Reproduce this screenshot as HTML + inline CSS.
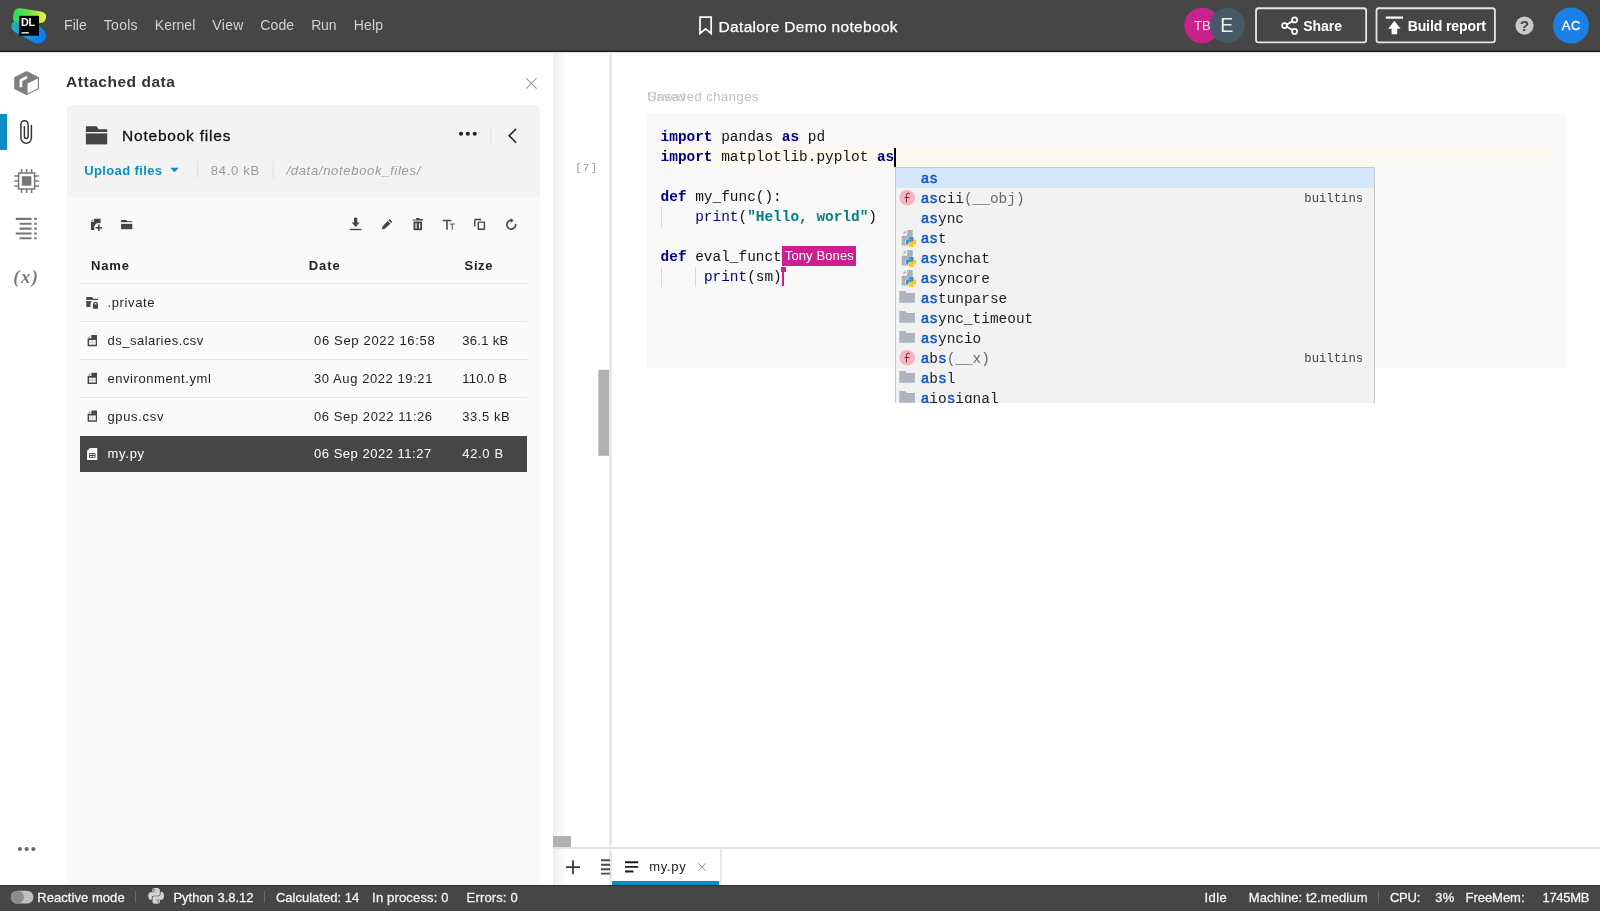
<!DOCTYPE html>
<html><head><meta charset="utf-8"><title>Datalore Demo notebook</title>
<style>
*{margin:0;padding:0;box-sizing:border-box}
html,body{width:1600px;height:911px;overflow:hidden;background:#fff;font-family:"Liberation Sans",sans-serif}
.a{position:absolute}
.tx{position:absolute;white-space:pre;display:block}
svg{position:absolute;left:0;top:0;overflow:visible}
pre{position:absolute;font:400 14.43px/20px "Liberation Mono",monospace;color:#111;white-space:pre}
.k{color:#000080;font-weight:700}
.s{color:#008080;font-weight:700}
.b{color:#000080}
.m{color:#0f55bd;-webkit-text-stroke:.5px #0f55bd}
.g{color:#6a6a6a}
#root{position:absolute;left:0;top:0;width:1600px;height:911px;will-change:transform}
</style></head><body><div id="root">
<!-- ===== left rail / panel backgrounds ===== -->
<div class="a" style="left:0;top:114px;width:7px;height:36px;background:#0a8ec4"></div>
<div class="a" style="left:67px;top:105px;width:473px;height:780px;background:#fafafa;border-radius:5px 5px 0 0"></div>
<div class="a" style="left:67px;top:105px;width:473px;height:92px;background:#f3f3f3;border-radius:5px 5px 0 0"></div>
<!-- rows -->
<div class="a" style="left:80px;top:283px;width:446.5px;height:1px;background:#e7e7e7"></div>
<div class="a" style="left:80px;top:321px;width:446.5px;height:1px;background:#e7e7e7"></div>
<div class="a" style="left:80px;top:359px;width:446.5px;height:1px;background:#e7e7e7"></div>
<div class="a" style="left:80px;top:397px;width:446.5px;height:1px;background:#e7e7e7"></div>
<div class="a" style="left:80px;top:436px;width:446.5px;height:36px;background:#464646"></div>
<!-- panel shadow + gutter -->
<div class="a" style="left:553px;top:53px;width:14px;height:832px;background:linear-gradient(to right,#ededed,#f8f8f8 50%,#fff)"></div>
<div class="a" style="left:553px;top:847px;width:1047px;height:2px;background:#e3e3e3"></div>
<div class="a" style="left:553px;top:836px;width:18px;height:10.5px;background:#b1b1b1"></div>
<!-- tab -->
<div class="a" style="left:612px;top:849px;width:108px;height:36px;background:#fff"></div>
<div class="a" style="left:612px;top:881px;width:107.3px;height:4px;background:#0a8ec4"></div>
<!-- ===== editor cell ===== -->
<div class="a" style="left:647px;top:113px;width:917.5px;height:255px;background:#f8f8f8"></div>
<div class="a" style="left:661px;top:147px;width:890px;height:20px;background:#fcfaef"></div>
<!-- indent guides -->
<div class="a" style="left:660.6px;top:207px;width:1px;height:19.5px;background:#d8d8d8"></div>
<div class="a" style="left:660.6px;top:267px;width:1px;height:19.5px;background:#d8d8d8"></div>
<div class="a" style="left:695.2px;top:267px;width:1px;height:19.5px;background:#d8d8d8"></div>
<pre style="left:660.6px;top:127.15px"><span class="k">import</span> pandas <span class="k">as</span> pd
<span class="k">import</span> matplotlib.pyplot <span class="k">as</span>

<span class="k">def</span> my_func():
    <span class="b">print</span>(<span class="s">"Hello, world"</span>)

<span class="k">def</span> eval_funct
     <span class="b">print</span>(sm)</pre>
<!-- caret -->
<div class="a" style="left:894.4px;top:147.5px;width:1.6px;height:19px;background:#000"></div>
<!-- collaborator cursor -->
<div class="a" style="left:782px;top:245.6px;width:74px;height:20.8px;background:#cd1f8d"></div>
<div class="a" style="left:780.6px;top:267px;width:5px;height:4.8px;background:#cd1f8d"></div>
<div class="a" style="left:781.8px;top:267px;width:2px;height:19.4px;background:#cd1f8d"></div>
<!-- ===== completion popup ===== -->
<div class="a" style="left:895px;top:167px;width:480.3px;height:236px;background:#f2f2f2;border:1px solid #c9c9c9;border-bottom:none"></div>
<div class="a" style="left:896px;top:168px;width:478.3px;height:19.6px;background:#d4e7fc"></div>
<pre style="left:920.7px;top:168.55px;color:#1e1e1e"><span class="m">as</span>
<span class="m">as</span>cii<span class="g">(__obj)</span>
<span class="m">as</span>ync
<span class="m">as</span>t
<span class="m">as</span>ynchat
<span class="m">as</span>yncore
<span class="m">as</span>tunparse
<span class="m">as</span>ync_timeout
<span class="m">as</span>yncio
<span class="m">a</span>b<span class="m">s</span><span class="g">(__x)</span>
<span class="m">a</span>b<span class="m">s</span>l
<span class="m">a</span>io<span class="m">s</span>ignal</pre>
<pre style="left:1304.3px;top:188.9px;font-size:12.25px;color:#444">builtins</pre>
<pre style="left:1304.3px;top:348.9px;font-size:12.25px;color:#444">builtins</pre>
<!-- ===== header ===== -->
<div class="a" style="left:0;top:0;width:1600px;height:51px;background:#464646"></div>
<!-- ===== status bar ===== -->
<div class="a" style="left:0;top:885px;width:1600px;height:26px;background:#464646;border-top:1px solid #2e2e2e"></div>
<div class="a" style="left:135.3px;top:891px;width:1px;height:12px;background:#6a6a6a"></div>
<div class="a" style="left:264px;top:891px;width:1px;height:12px;background:#6a6a6a"></div>
<div class="a" style="left:1378px;top:891px;width:1px;height:12px;background:#6a6a6a"></div>

<!--ICONS_START-->
<svg width="1600" height="911" viewBox="0 0 1600 911">
<defs>
<linearGradient id="lg1" x1="0" y1="0" x2="1" y2="0"><stop offset="0" stop-color="#2fdc55"/><stop offset=".45" stop-color="#5fe04a"/><stop offset="1" stop-color="#fbf03a"/></linearGradient>
<linearGradient id="lg2" x1="0" y1="0" x2="1" y2="0.4"><stop offset="0" stop-color="#22b6b0"/><stop offset=".5" stop-color="#149fd8"/><stop offset="1" stop-color="#0b7df2"/></linearGradient>
</defs>
<rect x="0" y="50.700" width="1600" height="1.350" fill="#171717"/><rect x="0" y="52" width="1600" height=".600" fill="#000" opacity=".12"/>
<rect x="609.400" y="52" width="2.400" height="833" fill="#e4e4e4"/><rect x="598.300" y="369.800" width="10.800" height="86" fill="#b1b1b1"/>
<!-- logo -->
<g id="logo">
<path d="M20.5 8.2 L41 11.6 Q47 13 46 17.5 L45.6 19 Q44.5 23 40 23 L20 24 Q12.5 24 13 17 L13.6 13.5 Q14.8 7.6 20.5 8.2Z" fill="url(#lg1)"/>
<path d="M17 21.5 Q11 21.5 11.5 27 Q12 30.5 15.5 32.5 L34 42.5 Q38 44.5 42 42.5 Q46.5 40 46 34.5 Q45.8 31 42.5 28.5 L36 23.5 Q33 21.2 29 21.3Z" fill="url(#lg2)"/>
<rect x="19.1" y="15.8" width="19.9" height="19.9" fill="#000"/>
<rect x="21.5" y="32.2" width="7.4" height="1.3" fill="#fff"/>
<text x="21.1" y="25.9" font-family="'Liberation Sans',sans-serif" font-weight="700" font-size="10.8" fill="#fff" letter-spacing="-0.35">DL</text>
</g>
<!-- bookmark -->
<path d="M700 17.1h11.2v16.4l-5.6-4.6-5.6 4.6z" fill="none" stroke="#fff" stroke-width="1.7" stroke-linejoin="miter"/>
<!-- avatars -->
<circle cx="1202" cy="25.5" r="17.8" fill="#c7238b"/>
<text x="1194" y="30.3" font-family="'Liberation Sans',sans-serif" font-size="13" fill="#f6e6f0">TB</text>
<circle cx="1227.4" cy="25.5" r="17.6" fill="#455a69" fill-opacity=".93"/>
<circle cx="1571" cy="25.5" r="18" fill="#1a80e6"/>
<rect x="1256.05" y="8.25" width="110.1" height="34.1" rx="2.4" fill="none" stroke="#e6e6e6" stroke-width="1.8"/>
<rect x="1376.5" y="8.25" width="118.4" height="34.1" rx="2.4" fill="none" stroke="#e6e6e6" stroke-width="1.8"/>
<!-- share icon -->
<g fill="none" stroke="#fff" stroke-width="1.7"><circle cx="1294.6" cy="19.9" r="2.5"/><circle cx="1284.6" cy="25.6" r="2.5"/><circle cx="1294.6" cy="31.4" r="2.5"/><path d="M1286.8 24.4l5.6-3.2M1286.8 26.8l5.6 3.3"/></g>
<!-- build icon -->
<g fill="#fff"><rect x="1385.8" y="16.5" width="17.2" height="2.2"/><path d="M1394.4 20.7l6.2 8h-3.4v5.5h-5.6v-5.5h-3.4z"/></g>
<!-- help -->
<circle cx="1524.5" cy="25.6" r="9.1" fill="#c9c9c9"/>
<text x="1524.6" y="31" text-anchor="middle" font-family="'Liberation Sans',sans-serif" font-weight="700" font-size="15.5" fill="#464646">?</text>
<!-- ===== left rail ===== -->
<g id="cube">
<path d="M26.6 71L39 77.2V89L26.6 95.2 14.2 89V77.2z" fill="#7f7f7f"/>
<path d="M27.6 83.6L37.9 78.5V88.3L27.6 93.5z" fill="#fff"/>
<path d="M20.9 87.2V80.3L27 77.2" fill="none" stroke="#fff" stroke-width="2.6"/>
</g>
<path d="M31.4 125.5V138a5.25 5.25 0 0 1-10.5 0V124.3a3.6 3.6 0 0 1 7.2 0V136.6a1.85 1.85 0 0 1-3.7 0V126.8" fill="none" stroke="#333" stroke-width="1.45" stroke-linecap="round"/>
<g id="chip" fill="none" stroke="#777" stroke-width="1.5">
<rect x="18.6" y="173" width="16" height="16"/>
<rect x="22.6" y="177" width="8" height="8" fill="#777"/>
<path d="M21.6 169v4M26.6 169v4M31.6 169v4M21.6 189v4M26.6 189v4M31.6 189v4M14.4 176h4M14.4 181h4M14.4 186h4M34.6 176h4.4M34.6 181h4.4M34.6 186h4.4"/>
</g>
<g id="outline" stroke="#777" stroke-width="2.1" fill="none">
<path d="M15.8 218.9H31.6M19.6 223.7H31.6M19.6 228.6H31.6M15.8 233.5H31.6M19.6 238.3H31.6"/>
<path d="M34.2 218.9h2.6M34.2 223.7h2.6M34.2 228.6h2.6M34.2 233.5h2.6M34.2 238.3h2.6"/>
</g>
<g fill="#666"><circle cx="19.9" cy="849" r="2.1"/><circle cx="26.6" cy="849" r="2.1"/><circle cx="33.4" cy="849" r="2.1"/></g>
<!-- ===== panel ===== -->
<path d="M526.2 78.2l10.4 10.4M536.6 78.2l-10.4 10.4" stroke="#9b9b9b" stroke-width="1.15" fill="none"/>
<g id="bigfolder" fill="#444"><path d="M85.900 126.300h10.700l1.900 3h8.700v2.600H85.900z"/><rect x="85.900" y="133.400" width="21.300" height="11"/></g>
<g fill="#222"><circle cx="461" cy="133.8" r="2.05"/><circle cx="467.8" cy="133.8" r="2.05"/><circle cx="474.7" cy="133.8" r="2.05"/></g>
<rect x="490.2" y="127" width="1" height="17" fill="#e2e2e2"/>
<path d="M516.2 128.8l-7 6.9 7 7" fill="none" stroke="#222" stroke-width="1.6"/>
<path d="M170.2 167.8h8.6l-4.3 4.5z" fill="#0d8fc6"/>
<rect x="197.1" y="161" width="1" height="17.4" fill="#e2e2e2"/>
<rect x="272.8" y="161" width="1" height="17.4" fill="#e2e2e2"/>
<!-- toolbar: new file -->
<g id="newfile" fill="#444">
<path d="M94.1 218.7h6.500v11.200h-9.600v-8.100h3.100z"/><path d="M91.200 221l1.900-1.900v1.900z" opacity=".8"/>
<circle cx="98.800" cy="227.800" r="4.700" fill="#fafafa"/>
<path d="M98 224.600h1.600v2.400h2.400v1.600h-2.400v2.400h-1.600v-2.400h-2.400v-1.600h2.400z"/>
</g>
<g id="smfolder" fill="#444"><path d="M121.100 220.100h5.200l1.200 1.100h4.800v1h-11.200z"/><rect x="121.100" y="223.900" width="11.200" height="5.300"/></g>
<!-- download -->
<g fill="#444"><path d="M354 217.8h3.3v4.8h2.4l-4.05 4.5-4.05-4.5h2.4z"/><rect x="349.7" y="228.8" width="11.7" height="1.4"/></g>
<!-- pencil -->
<g fill="#444"><path d="M389.6 219l2.7 2.7-1.3 1.3-2.7-2.7zM387.6 220.9l2.8 2.8-5.6 5.1-2.9.6.6-2.9z"/></g>
<!-- trash -->
<g fill="#444"><path d="M416.2 218h3.2v1.1h3.5v1.5h-10.2v-1.1h3.5z"/><path d="M413.5 221.6h8.6v7.4q0 1.2-1.2 1.2h-6.2q-1.2 0-1.2-1.2zM415.4 223.3v5.3h1.3v-5.3zM418.9 223.3v5.3h1.3v-5.3z" fill-rule="evenodd"/></g>
<!-- Tt -->
<g fill="#4a4a4a"><path d="M442.7 219.8h8.6v1.5h-3.5v8.4h-1.6v-8.4h-3.5z"/><path d="M449.6 223.4h5.4v1.2h-2.1v5.1h-1.2v-5.1h-2.1z" fill="#666"/></g>
<!-- copy -->
<g fill="none" stroke="#444" stroke-width="1.45"><rect x="478.3" y="222.1" width="6.1" height="7.2" rx=".6"/><path d="M474.8 226.6v-6.4q0-.8.8-.8h5.6"/></g>
<!-- refresh -->
<g fill="none" stroke="#444" stroke-width="1.650"><path d="M511.3 220.3a4.4 4.4 0 1 0 4.3 3.6"/></g><path d="M510.6 217.9l3 2.5-3 2.5z" fill="#444"/>
<!-- ===== row icons ===== -->
<g id="privicon" fill="#4a4a4a" fill-rule="evenodd"><path d="M86.250 297h5.800l1.400 1.700h4.600v1.300h-11.800z"/><path d="M86.250 301.100h5.700q-1.400 1.200-1.500 3.200v2.600h-4.200z"/>
<path d="M93 304.500v-.300a2.500 2.500 0 0 1 5 0v.300v4.250h-5zM94.500 304.500h2v-.400a1 1 0 0 0-2 0z"/></g>
<g fill="#474747" fill-rule="evenodd"><path d="M91.40 334.90h5.600v11.350h-9.400v-8h3.800zM89.10 339.90h6.650v4.850h-6.650z"/><path d="M88.00 337.60l2.300-2.300v2.300z" opacity=".55"/><path d="M89.10 342.05h6.650v.550h-6.650zM92.15 339.90h.550v4.850h-.550z" opacity=".45"/></g>
<g fill="#474747" fill-rule="evenodd"><path d="M91.40 372.70h5.600v11.350h-9.400v-8h3.800zM89.10 377.70h6.650v4.850h-6.650z"/><path d="M88.00 375.40l2.300-2.300v2.300z" opacity=".55"/><path d="M89.10 379.85h6.650v.550h-6.650zM92.15 377.70h.550v4.850h-.550z" opacity=".45"/></g>
<g fill="#474747" fill-rule="evenodd"><path d="M91.40 410.50h5.600v11.350h-9.400v-8h3.800zM89.10 415.50h6.650v4.850h-6.650z"/><path d="M88.00 413.20l2.300-2.300v2.300z" opacity=".55"/><path d="M89.10 417.65h6.650v.550h-6.650zM92.15 415.50h.550v4.850h-.550z" opacity=".45"/></g>
<g fill="#fff" fill-rule="evenodd"><path d="M89.95 447.90h7.300v12.100h-10.150v-9.250zM89.10 453.00h6.400v5h-6.400zM89.95 453.85v1.100h1.900v-1.100zM92.75 453.85v1.100h1.900v-1.100zM89.95 456.05v1.100h1.900v-1.100zM92.75 456.05v1.100h1.900v-1.100z"/></g>

<!-- ===== tab bar ===== -->
<rect x="720" y="849" width="1.750" height="35.500" fill="#e5e5e5"/>
<path d="M566 867.2h14M573 860.2v14" stroke="#3a3a3a" stroke-width="1.800" fill="none"/>
<path d="M601 860.2h9M601 864.7h9M601 869.2h9M601 873.6h9" stroke="#4a4a4a" stroke-width="1.900" fill="none"/>
<path d="M625 862.3h13.2M625 866.9h13.2M625 871.5h8.400" stroke="#1c1c1c" stroke-width="1.900" fill="none"/>
<path d="M698.2 863.2l7.6 7.6M705.8 863.2l-7.6 7.6" stroke="#9a9a9a" stroke-width="1" fill="none"/>
<!-- toggle -->
<rect x="10.900" y="890.700" width="22.500" height="12.900" rx="6.450" fill="#c1c1c1"/><circle cx="17.400" cy="897.150" r="6.450" fill="#8b8b8b"/>
<!-- python status icon -->
<g id="pyst" fill="#d2d2d2" fill-rule="evenodd"><path d="M156.07 888.10C152.07 888.10 152.30 889.83 152.30 889.83L152.30 891.63H156.15V892.18H150.81C150.81 892.18 148.30 891.87 148.30 895.95C148.30 899.95 150.50 899.80 150.50 899.80H151.83V897.91C151.83 897.91 151.75 895.71 153.95 895.71H157.72C157.72 895.71 159.84 895.79 159.84 893.67V890.22C159.84 890.22 160.15 888.10 156.07 888.10ZM153.95 889.12a.750.750 0 1 1 0 1.500a.750.750 0 0 1 0-1.500z"/><path d="M156.23 903.80C160.23 903.80 160.00 902.07 160.00 902.07L160.00 900.27H156.15V899.72H161.49C161.49 899.72 164.00 900.03 164.00 895.95C164.00 891.95 161.80 892.10 161.80 892.10H160.47V893.99C160.47 893.99 160.55 896.19 158.35 896.19H154.58C154.58 896.19 152.46 896.11 152.46 898.23V901.68C152.46 901.68 152.15 903.80 156.23 903.80ZM158.35 902.78a.750.750 0 1 1 0-1.500a.750.750 0 0 1 0 1.500z"/></g>
<!-- popup icons -->
<circle cx="907.2" cy="197.70" r="7.800" fill="#f8b3c0"/><path d="M909.300 193.50q-2.700-.700-2.800 1.900v6.600M904.900 197.50h4.200" fill="none" stroke="#6d3b47" stroke-width="1.050" stroke-linecap="round"/><circle cx="907.2" cy="357.70" r="7.800" fill="#f8b3c0"/><path d="M909.300 353.50q-2.700-.700-2.800 1.900v6.600M904.900 357.50h4.200" fill="none" stroke="#6d3b47" stroke-width="1.050" stroke-linecap="round"/><path d="M902.500 233.60l3.300-3.300v3.300z" fill="#a9b2ba"/><path d="M907.200 230.10h5.500v15.400h-11v-9.750h5.500z" fill="#a9b2ba"/><path d="M911.10 236.80C908.47 236.80 908.63 237.93 908.63 237.93L908.63 239.12H911.15V239.48H907.65C907.65 239.48 906.00 239.27 906.00 241.95C906.00 244.58 907.44 244.47 907.44 244.47H908.32V243.24C908.32 243.24 908.27 241.80 909.71 241.80H912.18C912.18 241.80 913.57 241.85 913.57 240.46V238.19C913.57 238.19 913.78 236.80 911.10 236.80Z" fill="#3d95d4" stroke="#f2f2f2" stroke-width="1.300" paint-order="stroke"/><path d="M911.20 247.10C913.83 247.10 913.67 245.97 913.67 245.97L913.67 244.78H911.15V244.42H914.65C914.65 244.42 916.30 244.63 916.30 241.95C916.30 239.32 914.86 239.43 914.86 239.43H913.98V240.66C913.98 240.66 914.03 242.10 912.59 242.10H910.12C910.12 242.10 908.73 242.05 908.73 243.44V245.71C908.73 245.71 908.52 247.10 911.20 247.10Z" fill="#fbc81e" stroke="#f2f2f2" stroke-width="1.300" paint-order="stroke"/><path d="M911.10 236.80C908.47 236.80 908.63 237.93 908.63 237.93L908.63 239.12H911.15V239.48H907.65C907.65 239.48 906.00 239.27 906.00 241.95C906.00 244.58 907.44 244.47 907.44 244.47H908.32V243.24C908.32 243.24 908.27 241.80 909.71 241.80H912.18C912.18 241.80 913.57 241.85 913.57 240.46V238.19C913.57 238.19 913.78 236.80 911.10 236.80Z" fill="#3d95d4"/><path d="M902.500 253.60l3.300-3.300v3.300z" fill="#a9b2ba"/><path d="M907.200 250.10h5.500v15.400h-11v-9.750h5.500z" fill="#a9b2ba"/><path d="M911.10 256.80C908.47 256.80 908.63 257.93 908.63 257.93L908.63 259.12H911.15V259.48H907.65C907.65 259.48 906.00 259.27 906.00 261.95C906.00 264.58 907.44 264.47 907.44 264.47H908.32V263.24C908.32 263.24 908.27 261.80 909.71 261.80H912.18C912.18 261.80 913.57 261.85 913.57 260.46V258.19C913.57 258.19 913.78 256.80 911.10 256.80Z" fill="#3d95d4" stroke="#f2f2f2" stroke-width="1.300" paint-order="stroke"/><path d="M911.20 267.10C913.83 267.10 913.67 265.97 913.67 265.97L913.67 264.78H911.15V264.42H914.65C914.65 264.42 916.30 264.63 916.30 261.95C916.30 259.32 914.86 259.43 914.86 259.43H913.98V260.66C913.98 260.66 914.03 262.10 912.59 262.10H910.12C910.12 262.10 908.73 262.05 908.73 263.44V265.71C908.73 265.71 908.52 267.10 911.20 267.10Z" fill="#fbc81e" stroke="#f2f2f2" stroke-width="1.300" paint-order="stroke"/><path d="M911.10 256.80C908.47 256.80 908.63 257.93 908.63 257.93L908.63 259.12H911.15V259.48H907.65C907.65 259.48 906.00 259.27 906.00 261.95C906.00 264.58 907.44 264.47 907.44 264.47H908.32V263.24C908.32 263.24 908.27 261.80 909.71 261.80H912.18C912.18 261.80 913.57 261.85 913.57 260.46V258.19C913.57 258.19 913.78 256.80 911.10 256.80Z" fill="#3d95d4"/><path d="M902.500 273.60l3.300-3.300v3.300z" fill="#a9b2ba"/><path d="M907.200 270.10h5.500v15.400h-11v-9.750h5.500z" fill="#a9b2ba"/><path d="M911.10 276.80C908.47 276.80 908.63 277.93 908.63 277.93L908.63 279.12H911.15V279.48H907.65C907.65 279.48 906.00 279.27 906.00 281.95C906.00 284.58 907.44 284.47 907.44 284.47H908.32V283.24C908.32 283.24 908.27 281.80 909.71 281.80H912.18C912.18 281.80 913.57 281.85 913.57 280.46V278.19C913.57 278.19 913.78 276.80 911.10 276.80Z" fill="#3d95d4" stroke="#f2f2f2" stroke-width="1.300" paint-order="stroke"/><path d="M911.20 287.10C913.83 287.10 913.67 285.97 913.67 285.97L913.67 284.78H911.15V284.42H914.65C914.65 284.42 916.30 284.63 916.30 281.95C916.30 279.32 914.86 279.43 914.86 279.43H913.98V280.66C913.98 280.66 914.03 282.10 912.59 282.10H910.12C910.12 282.10 908.73 282.05 908.73 283.44V285.71C908.73 285.71 908.52 287.10 911.20 287.10Z" fill="#fbc81e" stroke="#f2f2f2" stroke-width="1.300" paint-order="stroke"/><path d="M911.10 276.80C908.47 276.80 908.63 277.93 908.63 277.93L908.63 279.12H911.15V279.48H907.65C907.65 279.48 906.00 279.27 906.00 281.95C906.00 284.58 907.44 284.47 907.44 284.47H908.32V283.24C908.32 283.24 908.27 281.80 909.71 281.80H912.18C912.18 281.80 913.57 281.85 913.57 280.46V278.19C913.57 278.19 913.78 276.80 911.10 276.80Z" fill="#3d95d4"/><path d="M899.350 291.00h5.200q.700 0 1.100.600l1.100 1.500h8.150v9.750h-15.550z" fill="#acb5bd"/><path d="M899.350 311.00h5.200q.700 0 1.100.600l1.100 1.500h8.150v9.750h-15.550z" fill="#acb5bd"/><path d="M899.350 331.00h5.200q.700 0 1.100.600l1.100 1.500h8.150v9.750h-15.550z" fill="#acb5bd"/><path d="M899.350 371.00h5.200q.700 0 1.100.600l1.100 1.500h8.150v9.750h-15.550z" fill="#acb5bd"/><path d="M899.350 391.00h5.200q.700 0 1.100.600l1.100 1.500h8.150v9.750h-15.550z" fill="#acb5bd"/>
</svg>

<!--ICONS_END-->
<div class="a" style="left:890px;top:403px;width:490px;height:12px;background:#fff"></div>
<span id="t0" class="tx" style="left:64.06px;top:15.25px;font:400 14px/20px 'Liberation Sans', sans-serif;color:#d2d2d2;letter-spacing:0.079px;">File</span>
<span id="t1" class="tx" style="left:103.86px;top:15.25px;font:400 14px/20px 'Liberation Sans', sans-serif;color:#d2d2d2;letter-spacing:0.258px;">Tools</span>
<span id="t2" class="tx" style="left:154.86px;top:15.25px;font:400 14px/20px 'Liberation Sans', sans-serif;color:#d2d2d2;letter-spacing:-0.015px;">Kernel</span>
<span id="t3" class="tx" style="left:212.16px;top:15.25px;font:400 14px/20px 'Liberation Sans', sans-serif;color:#d2d2d2;letter-spacing:0.397px;">View</span>
<span id="t4" class="tx" style="left:260.16px;top:15.25px;font:400 14px/20px 'Liberation Sans', sans-serif;color:#d2d2d2;letter-spacing:0.178px;">Code</span>
<span id="t5" class="tx" style="left:311.16px;top:15.25px;font:400 14px/20px 'Liberation Sans', sans-serif;color:#d2d2d2;letter-spacing:-0.169px;">Run</span>
<span id="t6" class="tx" style="left:353.66px;top:15.25px;font:400 14px/20px 'Liberation Sans', sans-serif;color:#d2d2d2;letter-spacing:0.221px;">Help</span>
<span id="t7" class="tx" style="left:718.57px;top:15.93px;font:400 15.5px/22px 'Liberation Sans', sans-serif;color:#fff;letter-spacing:0.320px;-webkit-text-stroke:.25px #fff;">Datalore Demo notebook</span>
<span id="t8" class="tx" style="left:1220.33px;top:12.34px;font:400 19.5px/27px 'Liberation Sans', sans-serif;color:#eef2f5;letter-spacing:-1.176px;">E</span>
<span id="t9" class="tx" style="left:1303.16px;top:16.05px;font:700 14px/20px 'Liberation Sans', sans-serif;color:#fff;letter-spacing:-0.008px;">Share</span>
<span id="t10" class="tx" style="left:1407.66px;top:16.15px;font:700 14px/20px 'Liberation Sans', sans-serif;color:#fff;letter-spacing:-0.097px;">Build report</span>
<span id="t11" class="tx" style="left:1561.82px;top:17.40px;font:400 13px/18px 'Liberation Sans', sans-serif;color:#fff;letter-spacing:0.399px;-webkit-text-stroke:.3px #fff;">AC</span>
<span id="t12" class="tx" style="left:66.07px;top:70.73px;font:700 15.5px/22px 'Liberation Sans', sans-serif;color:#333;letter-spacing:0.528px;">Attached data</span>
<span id="t13" class="tx" style="left:122.07px;top:124.73px;font:400 15.5px/22px 'Liberation Sans', sans-serif;color:#111;letter-spacing:0.780px;-webkit-text-stroke:.3px #111;">Notebook files</span>
<span id="t14" class="tx" style="left:84.22px;top:161.70px;font:700 13px/18px 'Liberation Sans', sans-serif;color:#0d8fc6;letter-spacing:0.373px;">Upload files</span>
<span id="t15" class="tx" style="left:210.82px;top:161.50px;font:400 13px/18px 'Liberation Sans', sans-serif;color:#9a9a9a;letter-spacing:0.724px;">84.0 kB</span>
<span id="t16" class="tx" style="left:286.42px;top:161.50px;font:400 13px/18px 'Liberation Sans', sans-serif;color:#9a9a9a;letter-spacing:0.699px;font-style:italic;">/data/notebook_files/</span>
<span id="t17" class="tx" style="left:90.92px;top:256.70px;font:700 13px/18px 'Liberation Sans', sans-serif;color:#222;letter-spacing:0.910px;">Name</span>
<span id="t18" class="tx" style="left:308.72px;top:256.70px;font:700 13px/18px 'Liberation Sans', sans-serif;color:#222;letter-spacing:0.968px;">Date</span>
<span id="t19" class="tx" style="left:464.62px;top:256.70px;font:700 13px/18px 'Liberation Sans', sans-serif;color:#222;letter-spacing:0.611px;">Size</span>
<span id="t20" class="tx" style="left:107.42px;top:294.10px;font:400 13px/18px 'Liberation Sans', sans-serif;color:#1f1f1f;letter-spacing:0.652px;">.private</span>
<span id="t21" class="tx" style="left:107.42px;top:331.90px;font:400 13px/18px 'Liberation Sans', sans-serif;color:#1f1f1f;letter-spacing:0.506px;">ds_salaries.csv</span>
<span id="t22" class="tx" style="left:314.02px;top:331.90px;font:400 13px/18px 'Liberation Sans', sans-serif;color:#1f1f1f;letter-spacing:0.675px;">06 Sep 2022 16:58</span>
<span id="t23" class="tx" style="left:462.32px;top:331.90px;font:400 13px/18px 'Liberation Sans', sans-serif;color:#1f1f1f;letter-spacing:0.295px;">36.1 kB</span>
<span id="t24" class="tx" style="left:107.42px;top:369.80px;font:400 13px/18px 'Liberation Sans', sans-serif;color:#1f1f1f;letter-spacing:0.572px;">environment.yml</span>
<span id="t25" class="tx" style="left:314.02px;top:369.80px;font:400 13px/18px 'Liberation Sans', sans-serif;color:#1f1f1f;letter-spacing:0.576px;">30 Aug 2022 19:21</span>
<span id="t26" class="tx" style="left:462.32px;top:369.80px;font:400 13px/18px 'Liberation Sans', sans-serif;color:#1f1f1f;letter-spacing:0.172px;">110.0 B</span>
<span id="t27" class="tx" style="left:107.42px;top:407.50px;font:400 13px/18px 'Liberation Sans', sans-serif;color:#1f1f1f;letter-spacing:0.668px;">gpus.csv</span>
<span id="t28" class="tx" style="left:314.02px;top:407.50px;font:400 13px/18px 'Liberation Sans', sans-serif;color:#1f1f1f;letter-spacing:0.573px;">06 Sep 2022 11:26</span>
<span id="t29" class="tx" style="left:462.32px;top:407.50px;font:400 13px/18px 'Liberation Sans', sans-serif;color:#1f1f1f;letter-spacing:0.538px;">33.5 kB</span>
<span id="t30" class="tx" style="left:107.42px;top:445.30px;font:400 13px/18px 'Liberation Sans', sans-serif;color:#fff;letter-spacing:0.748px;">my.py</span>
<span id="t31" class="tx" style="left:314.02px;top:445.30px;font:400 13px/18px 'Liberation Sans', sans-serif;color:#fff;letter-spacing:0.514px;">06 Sep 2022 11:27</span>
<span id="t32" class="tx" style="left:462.32px;top:445.30px;font:400 13px/18px 'Liberation Sans', sans-serif;color:#fff;letter-spacing:0.661px;">42.0 B</span>
<span id="t33" class="tx" style="left:647.22px;top:88.10px;font:400 13px/18px 'Liberation Sans', sans-serif;color:#d0d0d0;letter-spacing:0.277px;">Saved</span>
<span id="t34" class="tx" style="left:647.22px;top:88.10px;font:400 13px/18px 'Liberation Sans', sans-serif;color:#bebebe;letter-spacing:0.519px;">Unsaved changes</span>
<span id="t35" class="tx" style="left:575.20px;top:160.87px;font:400 11px/15px 'Liberation Mono', monospace;color:#999;letter-spacing:1.050px;">[7]</span>
<span id="t36" class="tx" style="left:784.82px;top:246.80px;font:400 13px/18px 'Liberation Sans', sans-serif;color:#fff;letter-spacing:0.112px;">Tony Bones</span>
<span id="t37" class="tx" style="left:649.22px;top:857.80px;font:400 13px/18px 'Liberation Sans', sans-serif;color:#222;letter-spacing:0.688px;">my.py</span>
<span id="t38" class="tx" style="left:37.32px;top:889.20px;font:400 13px/18px 'Liberation Sans', sans-serif;color:#f4f4f4;letter-spacing:0.049px;-webkit-text-stroke:.28px #f4f4f4;">Reactive mode</span>
<span id="t39" class="tx" style="left:173.42px;top:889.20px;font:400 13px/18px 'Liberation Sans', sans-serif;color:#f4f4f4;letter-spacing:-0.006px;-webkit-text-stroke:.28px #f4f4f4;">Python 3.8.12</span>
<span id="t40" class="tx" style="left:275.92px;top:889.20px;font:400 13px/18px 'Liberation Sans', sans-serif;color:#f4f4f4;letter-spacing:0.010px;-webkit-text-stroke:.28px #f4f4f4;">Calculated: 14</span>
<span id="t41" class="tx" style="left:372.12px;top:889.20px;font:400 13px/18px 'Liberation Sans', sans-serif;color:#f4f4f4;letter-spacing:0.163px;-webkit-text-stroke:.28px #f4f4f4;">In process: 0</span>
<span id="t42" class="tx" style="left:466.62px;top:889.20px;font:400 13px/18px 'Liberation Sans', sans-serif;color:#f4f4f4;letter-spacing:0.146px;-webkit-text-stroke:.28px #f4f4f4;">Errors: 0</span>
<span id="t43" class="tx" style="left:1204.62px;top:889.20px;font:400 13px/18px 'Liberation Sans', sans-serif;color:#f4f4f4;letter-spacing:0.398px;-webkit-text-stroke:.28px #f4f4f4;">Idle</span>
<span id="t44" class="tx" style="left:1248.72px;top:889.20px;font:400 13px/18px 'Liberation Sans', sans-serif;color:#f4f4f4;letter-spacing:0.100px;-webkit-text-stroke:.28px #f4f4f4;">Machine: t2.medium</span>
<span id="t45" class="tx" style="left:1389.92px;top:889.20px;font:400 13px/18px 'Liberation Sans', sans-serif;color:#f4f4f4;letter-spacing:-0.201px;-webkit-text-stroke:.28px #f4f4f4;">CPU:</span>
<span id="t46" class="tx" style="left:1435.22px;top:889.20px;font:400 13px/18px 'Liberation Sans', sans-serif;color:#f4f4f4;letter-spacing:0.382px;-webkit-text-stroke:.28px #f4f4f4;">3%</span>
<span id="t47" class="tx" style="left:1465.52px;top:889.20px;font:400 13px/18px 'Liberation Sans', sans-serif;color:#f4f4f4;letter-spacing:-0.034px;-webkit-text-stroke:.28px #f4f4f4;">FreeMem:</span>
<span id="t48" class="tx" style="left:1542.42px;top:889.20px;font:400 13px/18px 'Liberation Sans', sans-serif;color:#f4f4f4;letter-spacing:-0.260px;-webkit-text-stroke:.28px #f4f4f4;">1745MB</span>
<span id="t49" class="tx" style="left:13.28px;top:264.02px;font:700 18.6px/26px 'Liberation Serif', serif;color:#7a7a7a;letter-spacing:1.448px;font-style:italic;">(x)</span>
</div></body></html>
